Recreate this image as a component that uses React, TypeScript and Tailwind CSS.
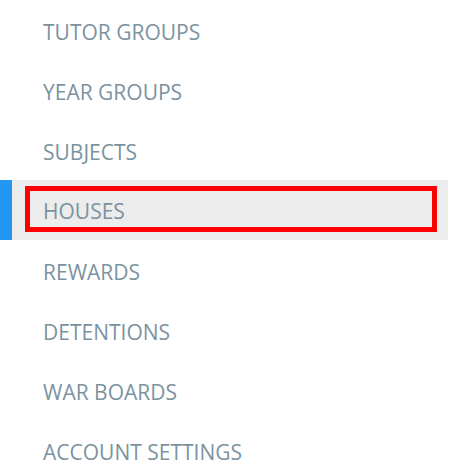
const items = [
  'TUTOR GROUPS',
  'YEAR GROUPS',
  'SUBJECTS',
  'HOUSES',
  'REWARDS',
  'DETENTIONS',
  'WAR BOARDS',
  'ACCOUNT SETTINGS',
];

export default function App() {
  return (
    <div className="w-[450px] h-[475px] overflow-hidden bg-white font-['Open_Sans',sans-serif]">
      <nav className="flex w-[448px] flex-col">
        {items.map((label) => {
          const active = label === 'HOUSES';
          return (
            <div key={label} className="flex h-[60px] items-stretch">
              <div className={active ? 'w-[12px] bg-[#2196f3]' : 'w-[12px]'} />
              {active ? (
                <div className="flex flex-1 bg-[#ececec] pt-[6px] pb-[8px] pl-[13px] pr-[11px]">
                  <div className="flex flex-1 items-center border-[5px] border-[#ff0000] pl-[13px] pt-[4px]">
                    <span className="text-[21px] leading-none text-[#7b939f]">{label}</span>
                  </div>
                </div>
              ) : (
                <div className="flex flex-1 items-center pl-[31px] pt-[4px]">
                  <span className="text-[21px] leading-none text-[#7b939f]">{label}</span>
                </div>
              )}
            </div>
          );
        })}
      </nav>
    </div>
  );
}
